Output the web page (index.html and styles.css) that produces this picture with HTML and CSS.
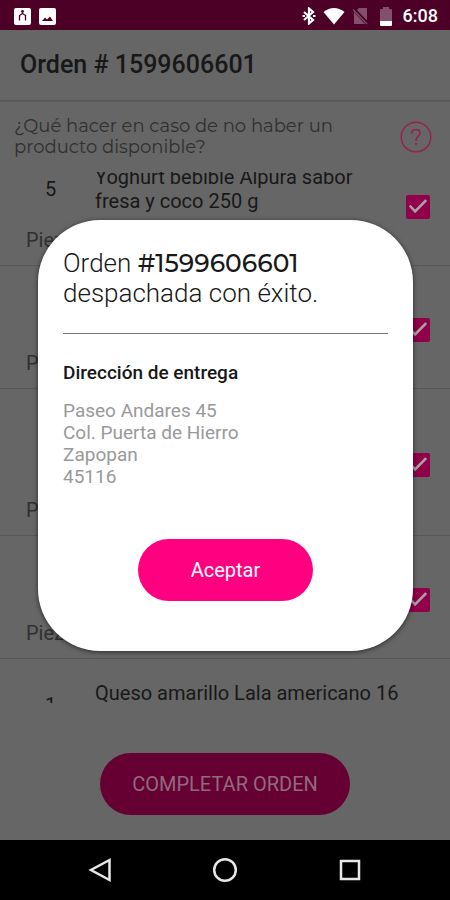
FILE: index.html
```html
<!DOCTYPE html>
<html lang="es">
<head>
    <meta charset="UTF-8">
    <meta name="viewport" content="width=device-width, initial-scale=1.0">
    <title>Orden # 1599606601</title>
    <link rel="stylesheet" href="styles.css">
</head>
<body>
    <div class="status-bar">
        <svg class="status-icon" viewBox="0 0 17 17">
            <rect width="17" height="17" rx="2" fill="#fff"/>
            <circle cx="8.5" cy="3.5" r="1.4" fill="#4d0026"/>
            <path d="M5.5 12.5V7.5L8.5 5.5L11.5 7.5V12.5" fill="none" stroke="#4d0026" stroke-width="1.3"/>
        </svg>
        <svg class="status-icon" viewBox="0 0 17 17">
            <rect width="17" height="17" rx="2" fill="#fff"/>
            <path d="M3 13L6 9.5L8 11.5L11 8.5L14 13Z" fill="#4d0026"/>
        </svg>
        <div class="status-right">
            <svg width="14" height="18" viewBox="0 0 14 18">
                <path d="M2 5L11 13L7 16.5V1.5L11 5L2 13" fill="none" stroke="#fff" stroke-width="2.2"/>
                <path d="M0.5 9H3M11 9H13.5" stroke="#fff" stroke-width="2.2"/>
            </svg>
            <svg width="22" height="18" viewBox="0 0 22 18">
                <path d="M0.5 5Q11 -3 21.5 5L11 17.5Z" fill="#fff"/>
            </svg>
            <svg width="17" height="18" viewBox="0 0 17 18">
                <path d="M7 1H15V13.5L5 3ZM2 5L13 17H2Z" fill="#82506a"/>
                <path d="M1 2.5L15 17" stroke="#82506a" stroke-width="1.2"/>
            </svg>
            <svg class="battery" width="12" height="19" viewBox="0 0 12 19">
                <path d="M3 0H9V2H11Q12 2 12 3V14H0V3Q0 2 1 2H3Z" fill="#82506a"/>
                <path d="M0 14H12V18Q12 19 11 19H1Q0 19 0 18Z" fill="#fff"/>
            </svg>
            <span class="clock">6:08</span>
        </div>
    </div>

    <main class="screen">
        <header class="header">
            <h1>Orden # 1599606601</h1>
        </header>

        <div class="help">
            <p>¿Qué hacer en caso de no haber un producto disponible?</p>
            <button class="help-button" type="button" aria-label="Ayuda">
                <svg width="32" height="32" viewBox="0 0 32 32" fill="none" stroke="#98204f">
                    <circle cx="16" cy="16" r="14.8" stroke-width="1.5"/>
                    <path d="M12 12.5V11.5Q12 8.5 16 8.5Q20 8.5 20 12Q20 14 18 15.5Q16 17 16 20" stroke-width="1.7"/>
                    <path d="M16 22V24" stroke-width="2"/>
                </svg>
            </button>
        </div>

        <div class="list">
            <div class="item item-first">
                <span class="qty">5</span>
                <label class="name" for="item1">Yoghurt bebible Alpura sabor fresa y coco 250 g</label>
                <span class="unit">Pieza</span>
                <input class="check" type="checkbox" id="item1" checked>
            </div>
            <div class="item">
                <span class="unit">Pieza</span>
                <input class="check" type="checkbox" aria-label="Pieza" checked>
            </div>
            <div class="item item-tall">
                <span class="unit">Pieza</span>
                <input class="check" type="checkbox" aria-label="Pieza" checked>
            </div>
            <div class="item">
                <span class="unit">Pieza</span>
                <input class="check" type="checkbox" aria-label="Pieza" checked>
            </div>
            <div class="item item-last">
                <span class="qty">1</span>
                <span class="name">Queso amarillo Lala americano 16</span>
            </div>
        </div>

        <footer class="footer">
            <button class="button button-complete" type="button">COMPLETAR ORDEN</button>
        </footer>

        <div class="overlay">
            <div class="modal" role="dialog" aria-labelledby="modalTitle">
                <h2 id="modalTitle">Orden <strong>#1599606601</strong><br>despachada con éxito.</h2>
                <hr>
                <h3>Dirección de entrega</h3>
                <address>
                    Paseo Andares 45<br>
                    Col. Puerta de Hierro<br>
                    Zapopan<br>
                    45116
                </address>
                <button class="button button-accept" type="button">Aceptar</button>
            </div>
        </div>
    </main>

    <nav class="nav-bar">
        <button type="button" aria-label="Atrás">
            <svg width="26" height="26" viewBox="0 0 26 26"><path d="M22.5 3V23L4 13Z"/></svg>
        </button>
        <button type="button" aria-label="Inicio">
            <svg width="26" height="26" viewBox="0 0 26 26"><circle cx="13" cy="13" r="10.8"/></svg>
        </button>
        <button type="button" aria-label="Recientes">
            <svg width="26" height="26" viewBox="0 0 26 26"><rect x="4" y="4" width="18" height="18"/></svg>
        </button>
    </nav>
</body>
</html>
```

FILE: styles.css
```css
* {
    box-sizing: border-box;
}
body {
    margin: 0;
    height: 100vh;
    display: flex;
    flex-direction: column;
    background: #666;
    color: #181818;
    font-family: Roboto, sans-serif;
    font-size: 20px;
    line-height: 24px;
}
h1, h2, h3, p {
    margin: 0;
}
button {
    padding: 0;
    border: 0;
    background: none;
    font-family: inherit;
    cursor: pointer;
}
svg {
    display: block;
}

/* status bar */
.status-bar {
    height: 30px;
    flex: none;
    display: flex;
    align-items: center;
    gap: 8px;
    padding: 2px 12px 0 14px;
    background: #4d0026;
    color: #fff;
}
.status-icon {
    width: 17px;
    height: 17px;
}
.status-right {
    margin-left: auto;
    display: flex;
    align-items: center;
    gap: 7px;
}
.battery {
    margin: 0 4px;
}
.clock {
    font-size: 18px;
    font-weight: 500;
}

/* order screen */
.screen {
    position: relative;
    flex: 1;
    min-height: 0;
    display: flex;
    flex-direction: column;
}
.header {
    padding: 23px 20px;
    border-bottom: 2px solid #5a5a5a;
}
.header h1 {
    font-size: 25px;
    line-height: 24px;
    font-weight: 500;
}
.help {
    display: flex;
    align-items: center;
    justify-content: space-between;
    padding: 14px 18px 14px 14px;
    color: #303030;
}
.help p {
    max-width: 340px;
    font-family: Montserrat, Inter, sans-serif;
    font-size: 18px;
    line-height: 21px;
}
.list {
    flex: 1;
    min-height: 0;
    overflow: hidden;
}
.item {
    display: grid;
    grid-template-columns: 69px 1fr 24px;
    grid-template-rows: minmax(48px, auto) 24px;
    row-gap: 15px;
    padding: 22px 20px 13px 26px;
    border-bottom: 1px solid #585858;
}
.item-first {
    margin-top: -29px;
}
.item-tall {
    grid-template-rows: 72px 24px;
}
.qty {
    width: 49px;
    align-self: center;
    text-align: center;
}
.name {
    max-width: 270px;
}
.item-last .name {
    max-width: none;
    grid-column: 2 / 4;
}
.unit {
    grid-column: 1;
    grid-row: 2;
    color: #303030;
}
.check {
    appearance: none;
    grid-column: 3;
    grid-row: 1 / 3;
    align-self: center;
    width: 24px;
    height: 24px;
    margin: 0 0 4px;
    border-radius: 2px;
    background: #91004a;
}
.check:checked::before {
    content: "";
    display: block;
    height: 24px;
    background: #a9a0a5;
    clip-path: polygon(12% 50%, 19% 43%, 38% 63%, 80% 20%, 88% 27%, 38% 78%);
}
.footer {
    padding: 50px 20px 25px;
    text-align: center;
}
.button {
    display: block;
    height: 62px;
    margin: 0 auto;
    border-radius: 31px;
    font-size: 20px;
}
.button-complete {
    width: 250px;
    background: #660033;
    color: #8f6b7d;
}

/* dialog */
.overlay {
    position: absolute;
    inset: 0;
    display: flex;
    align-items: center;
    padding: 0 37px 0 38px;
}
.modal {
    width: 100%;
    padding: 28px 25px 50px;
    border-radius: 62px;
    background: #fff;
    box-shadow: 0 1px 5px rgba(0, 0, 0, 0.6);
}
.modal h2 {
    font-size: 26px;
    line-height: 30px;
    font-weight: 300;
}
.modal h2 strong {
    font-family: Montserrat, Inter, sans-serif;
    font-size: 25px;
    font-weight: 500;
}
.modal hr {
    margin: 25px 0 27px;
    border: 0;
    border-top: 1px solid #777;
}
.modal h3 {
    font-size: 19px;
    line-height: 24px;
    font-weight: 500;
}
.modal address {
    margin: 15px 0 51px;
    color: #999;
    font-size: 19px;
    line-height: 22px;
    font-style: normal;
}
.button-accept {
    width: 175px;
    background: #ff0080;
    color: #fff;
}

/* system navigation */
.nav-bar {
    height: 60px;
    flex: none;
    display: flex;
    align-items: center;
    justify-content: center;
    gap: 99px;
    background: #000;
}
.nav-bar svg {
    fill: none;
    stroke: #e8e8e8;
    stroke-width: 2.5;
}
```
